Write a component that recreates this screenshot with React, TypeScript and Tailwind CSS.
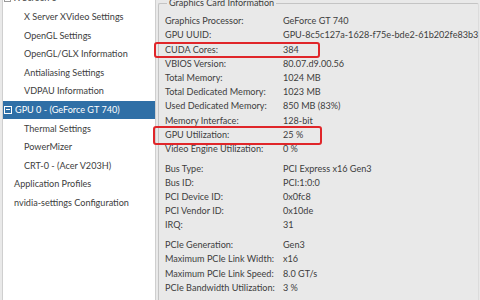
import React from "react";

type TreeItem = { label: string; indent: number; icon?: "box" | "minus"; selected?: boolean };

const tree: TreeItem[] = [
  { label: "X Screen 0", indent: 11, icon: "box" },
  { label: "X Server XVideo Settings", indent: 21 },
  { label: "OpenGL Settings", indent: 21 },
  { label: "OpenGL/GLX Information", indent: 21 },
  { label: "Antialiasing Settings", indent: 21 },
  { label: "VDPAU Information", indent: 21 },
  { label: "GPU 0 - (GeForce GT 740)", indent: 12, icon: "minus", selected: true },
  { label: "Thermal Settings", indent: 21 },
  { label: "PowerMizer", indent: 21 },
  { label: "CRT-0 - (Acer V203H)", indent: 21 },
  { label: "Application Profiles", indent: 11 },
  { label: "nvidia-settings Configuration", indent: 11 },
];

const groups: [string, string][][] = [
  [
    ["Graphics Processor:", "GeForce GT 740"],
    ["GPU UUID:", "GPU-8c5c127a-1628-f75e-bde2-61b202fe83b3"],
    ["CUDA Cores:", "384"],
    ["VBIOS Version:", "80.07.d9.00.56"],
    ["Total Memory:", "1024 MB"],
    ["Total Dedicated Memory:", "1023 MB"],
    ["Used Dedicated Memory:", "850 MB (83%)"],
    ["Memory Interface:", "128-bit"],
    ["GPU Utilization:", "25 %"],
    ["Video Engine Utilization:", "0 %"],
  ],
  [
    ["Bus Type:", "PCI Express x16 Gen3"],
    ["Bus ID:", "PCI:1:0:0"],
    ["PCI Device ID:", "0x0fc8"],
    ["PCI Vendor ID:", "0x10de"],
    ["IRQ:", "31"],
  ],
  [
    ["PCIe Generation:", "Gen3"],
    ["Maximum PCIe Link Width:", "x16"],
    ["Maximum PCIe Link Speed:", "8.0 GT/s"],
    ["PCIe Bandwidth Utilization:", "3 %"],
  ],
];

export default function App() {
  return (
    <div className="relative flex w-[480px] h-[300px] overflow-hidden bg-[#e9e9e9] font-['Lato',sans-serif] text-[9.1px] text-[#3d3d3d]">
      {/* Left tree */}
      <div className="ml-[2px] w-[154px] h-full shrink-0 bg-white border-l border-r border-[#cfcfcf]">
        <div className="mt-[-11px] flex flex-col">
          {tree.map((t, i) => (
            <div
              key={i}
              className={`relative h-[18.6px] flex items-center whitespace-nowrap ${t.selected ? "bg-[#2f6fa6] text-white" : ""}`}
              style={{ paddingLeft: t.indent }}
            >
              {t.icon === "box" && (
                <span className="absolute left-[1px] top-[6px] w-[7px] h-[7px] border border-[#9a9a9a] bg-white" />
              )}
              {t.icon === "minus" && (
                <span className="absolute left-[1px] top-[5px] w-[8px] h-[8px] border border-white flex items-center justify-center">
                  <span className="w-[4px] h-px bg-white" />
                </span>
              )}
              {t.label}
            </div>
          ))}
        </div>
      </div>

      {/* Right info */}
      <div className="flex-1 h-full">
        <fieldset className="ml-[2px] mr-[8px] mt-[-3px] border border-[#c4c4c4] border-r-[#dcdcdc] rounded-[2px] pl-[6px] pt-[5px] h-[320px]">
          <legend className="ml-[2px] px-[2px] leading-[12px]">Graphics Card Information</legend>
          {groups.map((g, gi) => (
            <div key={gi} className={gi > 0 ? "mt-[5.6px]" : ""}>
              {g.map(([k, v], i) => (
                <div key={i} className="flex h-[14.2px] items-center whitespace-nowrap">
                  <span className="w-[118px] shrink-0">{k}</span>
                  <span>{v}</span>
                </div>
              ))}
            </div>
          ))}
        </fieldset>
      </div>

      {/* Red highlight boxes */}
      <div className="absolute left-[154px] top-[42px] w-[166px] h-[16px] border-2 border-[#e0262a] rounded-[3px]" />
      <div className="absolute left-[153px] top-[126px] w-[169px] h-[19px] border-2 border-[#e0262a] rounded-[3px]" />
    </div>
  );
}
